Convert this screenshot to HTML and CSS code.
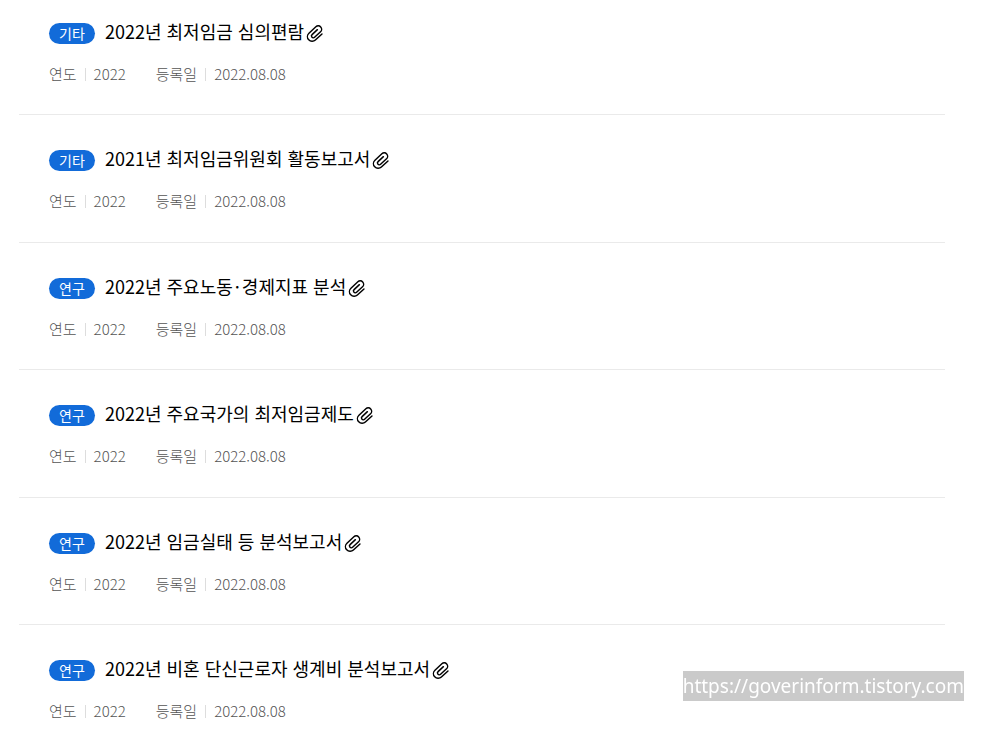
FILE: index.html
```html
<!DOCTYPE html>
<html lang="ko">
<head>
<meta charset="utf-8">
<title>자료실</title>
<link rel="stylesheet" href="styles.css">
</head>
<body>
<svg class="defs" aria-hidden="true"><symbol id="clip" viewBox="1.5 2 21 21"><path transform="rotate(-43 12 12.5)" d="M18 18H7.5a5.5 5.5 0 0 1 0-11H18.500a4 4 0 0 1 0 8H9a1.800 1.800 0 0 1 0-4.300H17.500" fill="none" stroke="currentColor" stroke-width="1.7" stroke-linecap="round" stroke-linejoin="round"/></symbol></svg>
<ul class="list">
<li class="item"><div class="head"><span class="badge">기타</span><a class="title" href="#">2022년 최저임금 심의편람</a><svg class="clip" role="img" aria-label="첨부파일"><use href="#clip"/></svg></div><dl class="meta"><div class="pair"><dt>연도</dt><dd>2022</dd></div><div class="pair"><dt>등록일</dt><dd>2022.08.08</dd></div></dl></li>
<li class="item"><div class="head"><span class="badge">기타</span><a class="title" href="#">2021년 최저임금위원회 활동보고서</a><svg class="clip" role="img" aria-label="첨부파일"><use href="#clip"/></svg></div><dl class="meta"><div class="pair"><dt>연도</dt><dd>2022</dd></div><div class="pair"><dt>등록일</dt><dd>2022.08.08</dd></div></dl></li>
<li class="item"><div class="head"><span class="badge">연구</span><a class="title" href="#">2022년 주요노동<span class="dot">·</span>경제지표 분석</a><svg class="clip" role="img" aria-label="첨부파일"><use href="#clip"/></svg></div><dl class="meta"><div class="pair"><dt>연도</dt><dd>2022</dd></div><div class="pair"><dt>등록일</dt><dd>2022.08.08</dd></div></dl></li>
<li class="item"><div class="head"><span class="badge">연구</span><a class="title" href="#">2022년 주요국가의 최저임금제도</a><svg class="clip" role="img" aria-label="첨부파일"><use href="#clip"/></svg></div><dl class="meta"><div class="pair"><dt>연도</dt><dd>2022</dd></div><div class="pair"><dt>등록일</dt><dd>2022.08.08</dd></div></dl></li>
<li class="item"><div class="head"><span class="badge">연구</span><a class="title" href="#">2022년 임금실태 등 분석보고서</a><svg class="clip" role="img" aria-label="첨부파일"><use href="#clip"/></svg></div><dl class="meta"><div class="pair"><dt>연도</dt><dd>2022</dd></div><div class="pair"><dt>등록일</dt><dd>2022.08.08</dd></div></dl></li>
<li class="item"><div class="head"><span class="badge">연구</span><a class="title" href="#">2022년 비혼 단신근로자 생계비 분석보고서</a><svg class="clip" role="img" aria-label="첨부파일"><use href="#clip"/></svg></div><dl class="meta"><div class="pair"><dt>연도</dt><dd>2022</dd></div><div class="pair"><dt>등록일</dt><dd>2022.08.08</dd></div></dl></li>
</ul>
<div class="watermark">https://goverinform.tistory.com</div>
</body>
</html>
```
FILE: styles.css
```css
* { box-sizing: border-box; }
body { margin: 0; background: #fff; color: #000; font-family: "Noto Sans CJK KR", sans-serif; overflow: hidden; }
.defs { position: absolute; width: 0; height: 0; }
.list { margin: 0; padding: 0 59px 0 19px; list-style: none; }
.item { padding: 30px 30px 28px; border-bottom: 1px solid #eaeaea; }
.item:nth-child(even) { padding-bottom: 29px; }
.item:first-child { padding-top: 18px; }
.item:last-child { border-bottom: 0; padding-bottom: 0; }
.head { display: flex; align-items: center; height: 30px; }
.badge { width: 46px; margin-right: 10px; border-radius: 11px; background: #126bd9; color: #fff; font-size: 14px; font-weight: 400; line-height: 21px; text-align: center; }
.title { padding-bottom: 4px; color: #000; font-size: 18px; font-weight: 400; line-height: 26px; text-decoration: none; }
.dot { padding: 0 2px; }
.clip { width: 18px; height: 18px; margin: 2px 0 0 2px; }
.meta { display: flex; gap: 30px; margin: 14px 0 0; color: #555; font-size: 15px; font-weight: 300; line-height: 24px; }
.pair { display: flex; align-items: center; }
.pair dd { display: flex; align-items: center; margin: 0; }
.pair dd::before { content: ""; width: 1px; height: 13px; margin: 0 8px; background: #ddd; }
.watermark { position: fixed; right: 40px; bottom: 40px; background: #cacaca; color: #fff; font-family: "Noto Sans", sans-serif; font-size: 19px; line-height: 30px; }
```
